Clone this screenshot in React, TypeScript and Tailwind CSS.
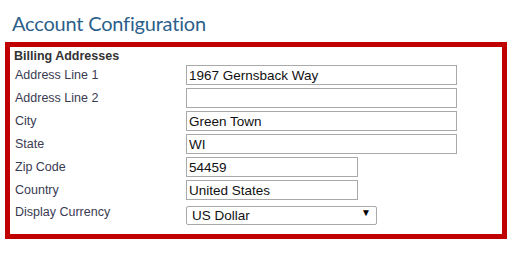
import { ChangeEvent, useState } from 'react';

const labelFont = { fontFamily: '"Liberation Sans", Arial, sans-serif' };

type Field = { key: string; label: string; wide: boolean };

const fields: Field[] = [
  { key: 'line1', label: 'Address Line 1', wide: true },
  { key: 'line2', label: 'Address Line 2', wide: true },
  { key: 'city', label: 'City', wide: true },
  { key: 'state', label: 'State', wide: true },
  { key: 'zip', label: 'Zip Code', wide: false },
  { key: 'country', label: 'Country', wide: false },
];

export default function App() {
  const [values, setValues] = useState<Record<string, string>>({
    line1: '1967 Gernsback Way',
    line2: '',
    city: 'Green Town',
    state: 'WI',
    zip: '54459',
    country: 'United States',
  });
  const [currency, setCurrency] = useState('USD');

  const update = (key: string) => (e: ChangeEvent<HTMLInputElement>) =>
    setValues({ ...values, [key]: e.target.value });

  const inputClass =
    'h-[20px] border border-[#a9a9a9] bg-white px-[2px] text-[13.5px] leading-[18px] text-[#111] focus:outline-none';

  return (
    <div className="min-h-screen bg-white pt-[11px]" style={labelFont}>
      <h1
        className="pl-[12px] text-[20px] leading-[24px] tracking-[-0.2px] text-[#2d5f8b]"
        style={{ fontFamily: 'Lato, "Liberation Sans", sans-serif' }}
      >
        Account Configuration
      </h1>

      <div className="mt-[7px] ml-[5px] h-[197px] w-[502px] border-[5px] border-[#c00000] pt-[1px]">
        <h2 className="h-4 pl-[4px] text-[12.5px] font-bold leading-4 text-[#333333]">Billing Addresses</h2>

        <div className="mt-[1px] flex flex-col gap-[3px]">
          {fields.map((f) => (
            <div key={f.key} className="flex h-[20px] items-center">
              <label className="w-[176px] pl-[5px] text-[12.5px] text-[#3a3a52]">{f.label}</label>
              <input
                value={values[f.key]}
                onChange={update(f.key)}
                className={inputClass + (f.wide ? ' w-[271px]' : ' w-[172px]')}
                style={labelFont}
              />
            </div>
          ))}

          <div className="flex h-[19px] items-center">
            <label className="w-[176px] pl-[5px] text-[12.5px] text-[#3a3a52]">Display Currency</label>
            <div className="relative h-[19px] w-[191px]">
              <select
                value={currency}
                onChange={(e) => setCurrency(e.target.value)}
                className="h-[19px] w-full appearance-none rounded-[2px] border border-[#a9a9a9] bg-white pl-[5px] text-[13.5px] leading-[17px] text-[#111] focus:outline-none"
                style={labelFont}
              >
                <option value="USD">US Dollar</option>
                <option value="EUR">Euro</option>
                <option value="GBP">British Pound</option>
              </select>
              <span className="pointer-events-none absolute right-[6px] top-[2px] text-[10px] leading-[15px] text-black">
                ▼
              </span>
            </div>
          </div>
        </div>
      </div>
    </div>
  );
}
